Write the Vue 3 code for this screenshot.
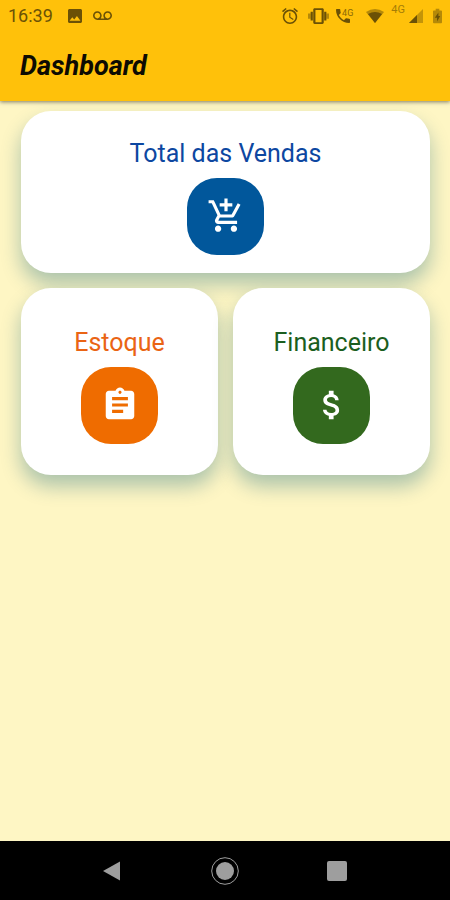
<script setup>
const cards = [
  {
    label: 'Total das Vendas',
    tone: 'sales',
    icon: 'M11 9h2V6h3V4h-3V1h-2v3H8v2h3v3zm-4 9c-1.1 0-1.99.9-1.99 2S5.9 22 7 22s2-.9 2-2-.9-2-2-2zm10 0c-1.1 0-1.99.9-1.99 2s.89 2 1.99 2 2-.9 2-2-.9-2-2-2zm-9.83-3.25l.03-.12.9-1.63h7.45c.75 0 1.41-.41 1.75-1.03l3.86-7.01L19.42 4h-.01l-1.1 2-2.76 5H8.53l-.13-.27L6.16 6l-.95-2-.94-2H1v2h2l3.6 7.59-1.35 2.45c-.16.28-.25.61-.25.96 0 1.1.9 2 2 2h12v-2H7.42c-.13 0-.25-.11-.25-.25z',
  },
  {
    label: 'Estoque',
    tone: 'stock',
    icon: 'M19 3h-4.18C14.4 1.84 13.3 1 12 1c-1.3 0-2.4.84-2.82 2H5c-1.1 0-2 .9-2 2v14c0 1.1.9 2 2 2h14c1.1 0 2-.9 2-2V5c0-1.1-.9-2-2-2zm-7 0c.55 0 1 .45 1 1s-.45 1-1 1-1-.45-1-1 .45-1 1-1zm2 14H7v-2h7v2zm3-4H7v-2h10v2zm0-4H7V7h10v2z',
  },
  {
    label: 'Financeiro',
    tone: 'finance',
    icon: 'M11.8 10.9c-2.27-.59-3-1.2-3-2.15 0-1.09 1.01-1.85 2.7-1.85 1.78 0 2.44.85 2.5 2.1h2.21c-.07-1.72-1.12-3.3-3.21-3.81V3h-3v2.16c-1.94.42-3.5 1.68-3.5 3.61 0 2.31 1.91 3.46 4.7 4.13 2.5.6 3 1.48 3 2.41 0 .69-.49 1.79-2.7 1.79-2.06 0-2.87-.92-2.98-2.1h-2.2c.12 2.19 1.76 3.42 3.68 3.83V21h3v-2.15c1.95-.37 3.5-1.5 3.5-3.55 0-2.84-2.43-3.81-4.7-4.4z',
  },
]
</script>

<template>
  <div class="screen">
    <header class="top">
      <div class="status">
        <span class="clock">16:39</span>
        <svg class="image" viewBox="3 3 18 18"><path d="M21 19V5c0-1.1-.9-2-2-2H5c-1.1 0-2 .9-2 2v14c0 1.1.9 2 2 2h14c1.1 0 2-.9 2-2zM8.5 13.5l2.5 3.01L14.5 12l4.5 6H5l3.5-4.5z" /></svg>
        <svg class="voicemail" viewBox="0 6 24 12"><path d="M18.5 6C15.46 6 13 8.46 13 11.5c0 1.33.47 2.55 1.26 3.5H9.74c.79-.95 1.26-2.17 1.26-3.5C11 8.46 8.54 6 5.5 6S0 8.46 0 11.5 2.46 17 5.5 17h13c3.04 0 5.5-2.46 5.5-5.5S21.54 6 18.5 6zm-13 9C3.57 15 2 13.43 2 11.5S3.57 8 5.5 8 9 9.57 9 11.5 7.43 15 5.5 15zm13 0c-1.93 0-3.5-1.57-3.5-3.5S16.57 8 18.5 8 22 9.57 22 11.5 20.43 15 18.5 15z" /></svg>
        <div class="system">
          <svg class="alarm" viewBox="2 2 20 20"><path d="M22 5.72l-4.6-3.86-1.29 1.53 4.6 3.86L22 5.72zM7.88 3.39L6.6 1.86 2 5.71l1.29 1.53 4.59-3.85zM12.5 8H11v6l4.75 2.85.75-1.23-4-2.37V8zM12 4c-4.97 0-9 4.03-9 9s4.02 9 9 9c4.97 0 9-4.03 9-9s-4.03-9-9-9zm0 16c-3.87 0-7-3.13-7-7s3.13-7 7-7 7 3.13 7 7-3.13 7-7 7z" /></svg>
          <svg class="vibrate" viewBox="0 3 24 18"><path class="half" d="M0 15h3V9H0zM21 9v6h3V9z" /><path d="M3 17h2.500V7H3zM18.500 17H21V7h-2.500zM16.500 3h-9C6.670 3 6 3.670 6 4.500v15c0 .83.67 1.500 1.500 1.500h9c.83 0 1.500-.67 1.500-1.500v-15c0-.83-.67-1.500-1.500-1.500zM15.500 19h-7V5h7v14z" /></svg>
          <span class="call">
            <svg class="phone" viewBox="3 3 18 18"><path d="M20 15.5c-1.25 0-2.45-.2-3.57-.57-.35-.11-.74-.03-1.02.24l-2.2 2.2c-2.83-1.44-5.15-3.75-6.59-6.59l2.2-2.21c.28-.26.36-.65.25-1C8.7 6.45 8.5 5.25 8.5 4c0-.55-.45-1-1-1H4c-.55 0-1 .45-1 1 0 9.39 7.61 17 17 17 .55 0 1-.45 1-1v-3.5c0-.55-.45-1-1-1z" /></svg>
            <span class="call-net">4G</span>
          </span>
          <svg class="wifi" viewBox="0 0 20 16"><path class="half" d="M1 4Q10-2 19 4L10 15z" /><path d="M3 6Q10 2 17 6L10 15z" /></svg>
          <span class="net">4G</span>
          <svg class="signal" viewBox="0 0 14 14"><path class="faint" d="M0 14L14 0v14z" /><path d="M0 14L8 6v8z" /></svg>
          <svg class="battery" viewBox="0 0 10 16"><path class="half" d="M3 0h4v2h2q1 0 1 1v12q0 1-1 1H1q-1 0-1-1V3q0-1 1-1h2z" /><path d="M6 4L2 10h2.5v4L8 8H6z" /></svg>
        </div>
      </div>
      <h1>Dashboard</h1>
    </header>

    <main class="cards">
      <button v-for="card in cards" :key="card.tone" type="button" class="card" :class="card.tone">
        <span class="label">{{ card.label }}</span>
        <span class="tile">
          <svg viewBox="0 0 24 24" aria-hidden="true"><path :d="card.icon" /></svg>
        </span>
      </button>
    </main>

    <nav class="system-nav">
      <button type="button" aria-label="Voltar"><svg viewBox="0 0 28 28"><path d="M4 14L21 4.5v19z" /></svg></button>
      <button type="button" aria-label="Início"><svg viewBox="0 0 28 28"><circle cx="14" cy="14" r="9" /><circle class="ring" cx="14" cy="14" r="13.3" /></svg></button>
      <button type="button" aria-label="Recentes"><svg viewBox="0 0 28 28"><rect x="4" y="4" width="20" height="20" rx="2" /></svg></button>
    </nav>
  </div>
</template>

<style>
body {
  margin: 0;
}
</style>

<style scoped>
.screen {
  min-height: 100vh;
  display: flex;
  flex-direction: column;
  background: #fef6c4;
  font-family: Roboto, "Liberation Sans", sans-serif;
}
.top {
  background: #ffc10a;
  box-shadow: 0 1px 4px rgba(0, 0, 0, 0.5);
  padding-bottom: 19px;
}
.status {
  display: flex;
  align-items: center;
  height: 32px;
  padding: 0 8px;
  color: #6b5106;
}
.status svg {
  fill: #6b5106;
  display: block;
  overflow: visible;
}
.clock {
  font-size: 18px;
  line-height: 32px;
}
.image {
  width: 14px;
  height: 14px;
  margin-left: 15px;
}
.voicemail {
  width: 19px;
  height: 10px;
  margin-left: 11px;
}
.system {
  display: flex;
  align-items: center;
  margin-left: auto;
}
.alarm {
  width: 16px;
  height: 16px;
}
.vibrate {
  width: 21px;
  height: 16px;
  margin-left: 10px;
}
.call {
  display: flex;
  align-items: flex-start;
  margin-left: 7px;
}
.phone {
  width: 14px;
  height: 14px;
}
.call-net {
  font-size: 9px;
  line-height: 9px;
  margin-left: -8px;
  opacity: 0.8;
}
.wifi {
  width: 20px;
  height: 16px;
  margin-left: 12px;
}
.net {
  font-size: 11px;
  line-height: 10px;
  margin: 0 4px 12px 6px;
  opacity: 0.6;
}
.signal {
  width: 14px;
  height: 14px;
}
.battery {
  width: 9px;
  height: 16px;
  margin-left: 10px;
}
.faint {
  opacity: 0.4;
}
.half {
  opacity: 0.5;
}
h1 {
  margin: 18px 20px 0;
  font-size: 27px;
  line-height: 32px;
  font-weight: 700;
  font-style: italic;
  color: #0d0b02;
}
.cards {
  flex: 1;
  display: grid;
  grid-template-columns: 1fr 1fr;
  align-content: start;
  gap: 15px;
  padding: 10px 20px 30px 21px;
}
.card {
  display: flex;
  flex-direction: column;
  align-items: center;
  gap: 8px;
  margin: 0;
  padding: 39px 8px 31px;
  border: 0;
  border-radius: 30px;
  background: #fff;
  box-shadow: 0 11px 20px rgba(0, 90, 120, 0.33);
  font: inherit;
}
.sales {
  grid-column: 1 / -1;
  padding: 27px 8px 18px;
  color: #0d47a1;
}
.stock {
  color: #ea6414;
}
.finance {
  color: #1b5e20;
}
.label {
  font-size: 25px;
  line-height: 32px;
}
.tile {
  display: grid;
  place-items: center;
  width: 77px;
  height: 77px;
  border-radius: 30px;
}
.sales .tile {
  background: #01579b;
}
.stock .tile {
  background: #ef6c00;
}
.finance .tile {
  background: #33691e;
}
.tile svg {
  width: 38px;
  height: 38px;
  padding-bottom: 1px;
  fill: #fff;
}
.system-nav {
  display: flex;
  justify-content: center;
  gap: 84px;
  padding: 16px 0 15px;
  background: #000;
}
.system-nav button {
  margin: 0;
  padding: 0;
  border: 0;
  background: none;
}
.system-nav svg {
  display: block;
  width: 28px;
  height: 28px;
  fill: #9e9e9e;
  overflow: visible;
}
.system-nav .ring {
  fill: none;
  stroke: #9e9e9e;
  stroke-width: 1;
}
</style>
